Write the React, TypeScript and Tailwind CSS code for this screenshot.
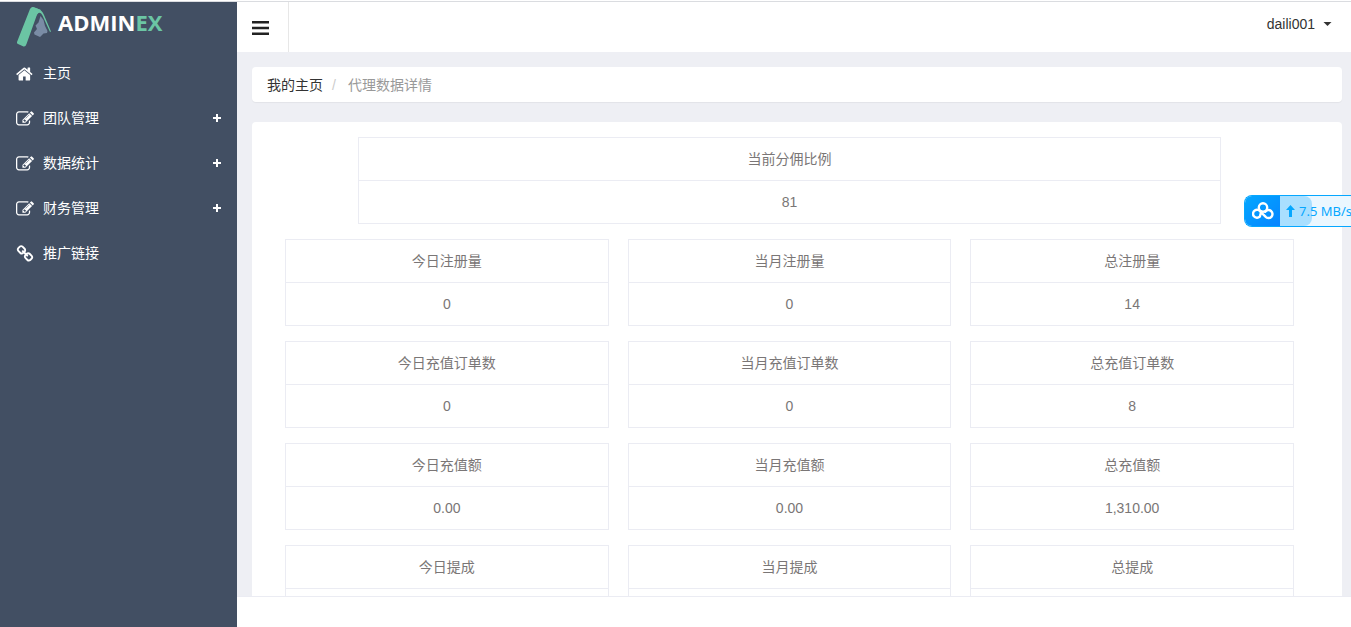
import { useState } from 'react';

interface MenuItem {
  label: string;
  icon: string;
  expandable?: boolean;
}

interface Stat {
  label: string;
  value?: string;
}

const HOME_ICON =
  'M1408 992v480q0 26-19 45t-45 19h-384v-384h-256v384h-384q-26 0-45-19t-19-45v-480q0-1 .5-3t.5-3l575-474 575 474q1 2 1 6zm223-69l-62 74q-8 9-21 11h-3q-13 0-21-7l-692-577-692 577q-12 8-24 7-13-2-21-11l-62-74q-8-10-7-23.5t11-21.5l719-599q32-26 76-26t76 26l244 204v-195q0-14 9-23t23-9h192q14 0 23 9t9 23v408l219 182q10 8 11 21.5t-7 23.5z';
const EDIT_ICON =
  'M888 1184l116-116-152-152-116 116v56h96v96h56zm440-720q-16-16-33 1l-350 350q-17 17-1 33t33-1l350-350q17-17 1-33zm80 594v190q0 119-84.5 203.5t-203.5 84.5h-832q-119 0-203.5-84.5t-84.5-203.5v-832q0-119 84.5-203.5t203.5-84.5h832q63 0 117 25 15 7 18 23 3 17-9 29l-49 49q-14 14-32 8-23-6-45-6h-832q-66 0-113 47t-47 113v832q0 66 47 113t113 47h832q66 0 113-47t47-113v-126q0-13 9-22l64-64q15-15 35-7t20 29zm-96-738l288 288-672 672h-288v-288zm444 132l-92 92-288-288 92-92q28-28 68-28t68 28l152 152q28 28 28 68t-28 68z';
const LINK_ICON =
  'M1520 1216q0-40-28-68l-208-208q-28-28-68-28-42 0-72 32 3 3 19 18.5t21.5 21.5 15 19 13 25.5 3.5 27.5q0 40-28 68t-68 28q-15 0-27.5-3.5t-25.5-13-19-15-21.5-21.5-18.5-19q-33 31-33 73 0 40 28 68l206 207q27 27 68 27 40 0 68-26l147-146q28-28 28-67zm-703-705q0-40-28-68l-206-207q-28-28-68-28-39 0-68 27l-147 146q-28 28-28 67 0 40 28 68l208 208q27 27 68 27 42 0 72-31-3-3-19-18.5t-21.5-21.5-15-19-13-25.5-3.5-27.5q0-40 28-68t68-28q15 0 27.5 3.5t25.5 13 19 15 21.5 21.5 18.5 19q33-31 33-73zm895 705q0 120-85 203l-147 146q-83 83-203 83-121 0-204-85l-206-207q-83-83-83-203 0-123 88-209l-88-88q-86 88-208 88-120 0-204-84l-208-208q-84-84-84-204t85-203l147-146q83-83 203-83 121 0 204 85l206 207q83 83 83 203 0 123-88 209l88 88q86-88 208-88 120 0 204 84l208 208q84 84 84 204z';

const menuItems: MenuItem[] = [
  { label: '主页', icon: HOME_ICON },
  { label: '团队管理', icon: EDIT_ICON, expandable: true },
  { label: '数据统计', icon: EDIT_ICON, expandable: true },
  { label: '财务管理', icon: EDIT_ICON, expandable: true },
  { label: '推广链接', icon: LINK_ICON },
];

const stats: Stat[] = [
  { label: '今日注册量', value: '0' },
  { label: '当月注册量', value: '0' },
  { label: '总注册量', value: '14' },
  { label: '今日充值订单数', value: '0' },
  { label: '当月充值订单数', value: '0' },
  { label: '总充值订单数', value: '8' },
  { label: '今日充值额', value: '0.00' },
  { label: '当月充值额', value: '0.00' },
  { label: '总充值额', value: '1,310.00' },
  { label: '今日提成' },
  { label: '当月提成' },
  { label: '总提成' },
];

const Logo = () => (
  <a href="#" className="flex h-12 items-start pt-[5px] pl-4">
    <svg width="36" height="40" viewBox="0 0 36 40" aria-hidden="true">
      <path d="M14 2Q15 0 17 0L25 3Q22 5 20.500 9L10.500 37Q9.500 40 7.500 39.500L2 37Q.5 36.500 1 35Z" fill="#6bc5a4" />
      <path d="M16 0Q23 1.500 25.500 4Q27 5.500 28 8L35 24.500L34 25L26.500 8.500Q25 5 22.500 6Q20.500 7 19 11Z" fill="#6bc5a4" />
      <path d="M24.500 9L27.500 13L29 19L31.500 24L31 26L27.500 26.500L24 30L18.500 27.500L18 25.500L21 22L19.500 18.500L22.500 15.500Z" fill="#7a8ca5" />
    </svg>
    <span className="ml-1.5 font-['Open_Sans',sans-serif] text-[22px] leading-[30px] font-bold text-white">
      ADMIN<span className="text-[#6bc5a4]">EX</span>
    </span>
  </a>
);

const Sidebar = () => (
  <aside className="w-[237px] shrink-0 bg-[#424f63]">
    <Logo />
    <nav>
      {menuItems.map((item) => (
        <a key={item.label} href="#" className="flex h-[45px] items-center px-4 text-white">
          <svg width="18" height="18" viewBox="0 0 1792 1792" fill="currentColor" className="mt-0.5" aria-hidden="true">
            <path d={item.icon} />
          </svg>
          <span className="ml-[9px] flex-1">{item.label}</span>
          {item.expandable && (
            <svg width="8" height="8" viewBox="0 0 8 8" fill="currentColor" aria-hidden="true">
              <path d="M3 0h2v3h3v2H5v3H3V5H0V3h3z" />
            </svg>
          )}
        </a>
      ))}
    </nav>
  </aside>
);

const StatTable = ({ label, value }: Stat) => (
  <table className="w-full border-collapse text-center">
    <thead>
      <tr>
        <th className="h-[43px] border border-[#ebecf3] p-0 font-normal">{label}</th>
      </tr>
    </thead>
    <tbody>
      <tr>
        <td className="h-[43px] border border-[#ebecf3] p-0">{value}</td>
      </tr>
    </tbody>
  </table>
);

const SpeedBadge = () => (
  <div className="fixed top-[195px] right-0 flex h-8 w-[107px] overflow-hidden rounded-l-lg border border-r-0 border-[#06a7ff] bg-[#ebf7ff]">
    <div className="flex w-[35px] shrink-0 items-center justify-center bg-linear-to-br from-[#06a7ff] to-[#0a84ff]">
      <svg width="22" height="18" viewBox="0 0 22 18" fill="none" stroke="#fff" strokeWidth="2.4" strokeLinecap="round" aria-hidden="true">
        <circle cx="11" cy="5.500" r="4.200" />
        <path d="M9.300 9.500L7.800 14.700A4 4 0 1 1 8.500 9.800L13.500 14.700A4 4 0 1 0 13.200 9.800" />
      </svg>
    </div>
    <div className="relative flex-1">
      <div className="absolute inset-y-0 left-0 w-8 rounded-r-lg bg-[#a9dfff]" />
      <div className="relative flex h-full items-center pl-1.5 whitespace-nowrap text-[#06a7ff]">
        <svg width="9" height="12" viewBox="0 0 9 12" fill="currentColor" aria-hidden="true">
          <path d="M4.500 0L9 5H6v7H3V5H0z" />
        </svg>
        <span className="ml-1 font-['Noto_Sans',sans-serif] text-[13px]">7.5 MB/s</span>
      </div>
    </div>
  </div>
);

const App = () => {
  const [menuOpen, setMenuOpen] = useState(true);

  return (
    <div className="flex h-screen flex-col pt-px font-['Liberation_Sans','Noto_Sans_CJK_SC',sans-serif] text-[14px] leading-5 text-[#7a7676]">
      <div className="flex min-h-0 flex-1 border-t border-[#dadce0]">
        {menuOpen && <Sidebar />}

        <div className="flex min-w-0 flex-1 flex-col">
          <header className="flex h-[50px] shrink-0 items-center justify-between bg-white">
            <button
              type="button"
              aria-label="Toggle menu"
              className="flex h-full w-[52px] items-center border-r border-[#e7e7e7] pt-0.5 pl-[15px] text-[#222]"
              onClick={() => setMenuOpen(!menuOpen)}
            >
              <svg width="18" height="14" viewBox="0 0 18 14" fill="currentColor" aria-hidden="true">
                <path d="M0 0h17v2.500H0zM0 5.700h17v2.500H0zM0 11.500h17v2.500H0z" />
              </svg>
            </button>
            <button type="button" className="mr-[19px] mb-1.5 flex items-center gap-2 text-[#333]">
              daili001
              <svg width="9" height="4" viewBox="0 0 9 4" fill="currentColor" aria-hidden="true">
                <path d="M.5 0h8l-4 4z" />
              </svg>
            </button>
          </header>

          <main className="min-h-0 flex-1 overflow-y-auto border-b border-[#ebecf3] bg-[#eeeff4] pt-[15px] pr-[9px] pl-[15px] [scrollbar-width:none]">
            <nav className="mb-5 flex h-[35px] items-center rounded-[4px] bg-white px-[15px] shadow-[0_1px_1px_rgba(0,0,0,0.05)]">
              <a href="#" className="text-[#333]">
                我的主页
              </a>
              <span className="w-[25px] pl-[9px] text-[#ccc]">/</span>
              <span className="text-[#999]">代理数据详情</span>
            </nav>

            <section className="rounded-[4px] bg-white pt-[15px] pr-12 pb-[15px] pl-[33px]">
              <div className="mx-[73px] mb-[15px]">
                <StatTable label="当前分佣比例" value="81" />
              </div>
              <div className="grid grid-cols-3 gap-x-[19px] gap-y-[15px]">
                {stats.map((stat) => (
                  <StatTable key={stat.label} label={stat.label} value={stat.value} />
                ))}
              </div>
            </section>
          </main>

          <footer className="h-[30px] shrink-0 bg-white" />
        </div>
      </div>

      <SpeedBadge />
    </div>
  );
};

export default App;
